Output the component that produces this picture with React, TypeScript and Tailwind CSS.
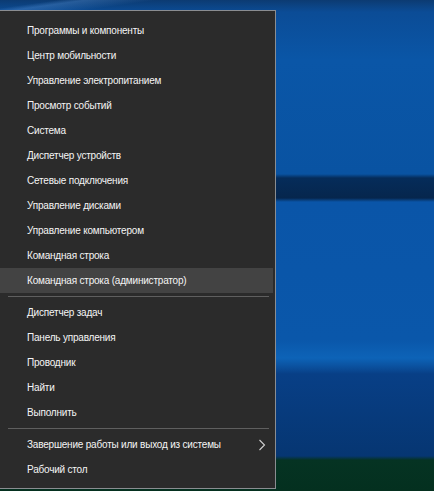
import React from "react";

type Entry = { label: string; active?: boolean; submenu?: boolean } | "sep";

const entries: Entry[] = [
  { label: "Программы и компоненты" },
  { label: "Центр мобильности" },
  { label: "Управление электропитанием" },
  { label: "Просмотр событий" },
  { label: "Система" },
  { label: "Диспетчер устройств" },
  { label: "Сетевые подключения" },
  { label: "Управление дисками" },
  { label: "Управление компьютером" },
  { label: "Командная строка" },
  { label: "Командная строка (администратор)", active: true },
  "sep",
  { label: "Диспетчер задач" },
  { label: "Панель управления" },
  { label: "Проводник" },
  { label: "Найти" },
  { label: "Выполнить" },
  "sep",
  { label: "Завершение работы или выход из системы", submenu: true },
  { label: "Рабочий стол" },
];

const Chevron = () => (
  <svg width="8" height="12" viewBox="0 0 8 12" className="shrink-0">
    <polyline
      points="1.5,1 6.5,6 1.5,11"
      fill="none"
      stroke="#d0d0d0"
      strokeWidth="1.1"
    />
  </svg>
);

const App = () => {
  return (
    <div
      className="h-[491px] w-[434px] overflow-hidden bg-[linear-gradient(172deg,transparent_0px,transparent_8px,rgba(90,150,220,0.35)_12px,transparent_22px),linear-gradient(180deg,#0c3b72_0px,#0b4c96_12px,#0a56a7_60px,#0953a2_174px,#052c5a_178px,#06264d_198px,#0a55a8_202px,#0a57aa_340px,#0d63b7_358px,#0b52a0_366px,#083f86_374px,#063672_456px,#053323_460px,#04301f_491px)] pt-[10px]"
      style={{ fontFamily: '"Liberation Sans", Arial, sans-serif' }}
    >
      <div className="flex h-[479px] w-[276px] flex-col border-y border-r border-[#8a8d91] bg-[#2b2b2b] pb-[6px] pt-[7px]">
        {entries.map((e, i) =>
          e === "sep" ? (
            <div key={i} className="flex h-[7px] items-center">
              <div className="ml-[8px] mr-[6px] h-px flex-1 bg-[#5f5f5f]" />
            </div>
          ) : (
            <div
              key={i}
              className={`mr-[2px] flex h-[25px] items-center justify-between pl-[27px] pr-[7px] text-[10px] leading-none tracking-[-0.2px] text-[#f5f5f5] ${
                e.active ? "bg-[#434343]" : ""
              }`}
            >
              <span className="whitespace-nowrap">{e.label}</span>
              {e.submenu && <Chevron />}
            </div>
          ),
        )}
      </div>
    </div>
  );
};

export default App;
